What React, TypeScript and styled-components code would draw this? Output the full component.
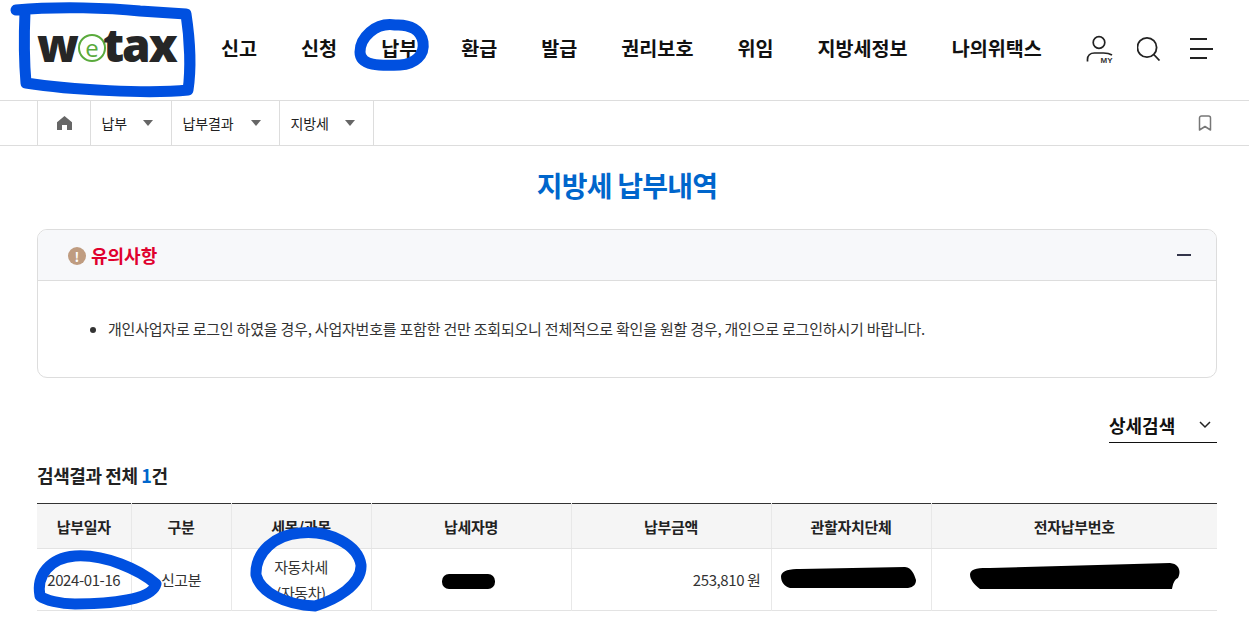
import React from 'react'
import styled, { createGlobalStyle } from 'styled-components'

const GlobalStyle = createGlobalStyle`
  html, body {
    margin: 0;
    padding: 0;
    background: #fff;
    color: #222;
    font-family: "Noto Sans CJK KR", "Noto Sans", sans-serif;
  }
  * { box-sizing: border-box; }
`

const menus = ['신고', '신청', '납부', '환급', '발급', '권리보호', '위임', '지방세정보', '나의위택스']
const crumbs = [
  { label: '납부', width: 81 },
  { label: '납부결과', width: 108 },
  { label: '지방세', width: 94 },
]
const columns = [
  { label: '납부일자', width: 94 },
  { label: '구분', width: 100 },
  { label: '세목/과목', width: 140 },
  { label: '납세자명', width: 200 },
  { label: '납부금액', width: 200 },
  { label: '관할자치단체', width: 160 },
  { label: '전자납부번호', width: 286 },
]

export default function App() {
  return (
    <Page>
      <GlobalStyle />
      <Header>
        <Logo>
          <LogoText>w</LogoText>
          <LogoE>e</LogoE>
          <LogoText>tax</LogoText>
        </Logo>
        <Nav>
          {menus.map((m) => (
            <NavItem key={m}>{m}</NavItem>
          ))}
        </Nav>
        <Utils>
          <UtilIcon width="30" height="32" viewBox="0 0 30 32">
            <circle cx="14" cy="10.5" r="5.8" fill="none" stroke="#222" strokeWidth="1.7" />
            <path d="M2.5 29.5v-2c0-3.5 2.5-6.5 7-6.5h9c3 0 6 .5 8.5 2" fill="none" stroke="#222" strokeWidth="1.7" />
            <MyLabel x="15.5" y="31">MY</MyLabel>
          </UtilIcon>
          <UtilIcon width="24" height="26" viewBox="0 0 24 26">
            <circle cx="10" cy="12.5" r="9.6" fill="none" stroke="#222" strokeWidth="1.8" />
            <path d="M16.8 19.5l5.7 6" fill="none" stroke="#222" strokeWidth="1.8" />
          </UtilIcon>
          <UtilIcon width="30" height="22" viewBox="0 0 30 22">
            <path d="M7 2h17M7 12h23M7 21h17" fill="none" stroke="#222" strokeWidth="2" />
          </UtilIcon>
        </Utils>
      </Header>

      <BreadcrumbBar>
        <Crumbs>
          <HomeCell>
            <svg width="15" height="14" viewBox="0 0 15 14">
              <path d="M7.5 0L15 6.2V14H10V9H5v5H0V6.2z" fill="#666" />
            </svg>
          </HomeCell>
          {crumbs.map((c) => (
            <Crumb key={c.label} $width={c.width}>
              {c.label}
              <Caret />
            </Crumb>
          ))}
        </Crumbs>
        <svg width="14" height="16" viewBox="0 0 14 16">
          <path d="M1.5 3a2 2 0 0 1 2-2h7a2 2 0 0 1 2 2v12L7 11.5 1.5 15z" fill="none" stroke="#777" strokeWidth="1.5" strokeLinejoin="round" />
        </svg>
      </BreadcrumbBar>

      <Title>지방세 납부내역</Title>

      <Notice>
        <NoticeHead>
          <NoticeLabel>
            <NoticeBadge>!</NoticeBadge>
            유의사항
          </NoticeLabel>
          <Collapse />
        </NoticeHead>
        <NoticeBody>
          <NoticeList>
            <li>개인사업자로 로그인 하였을 경우, 사업자번호를 포함한 건만 조회되오니 전체적으로 확인을 원할 경우, 개인으로 로그인하시기 바랍니다.</li>
          </NoticeList>
        </NoticeBody>
      </Notice>

      <SearchRow>
        <DetailSearch>
          상세검색
          <svg width="12" height="8" viewBox="0 0 12 8">
            <path d="M1 1l5 5 5-5" fill="none" stroke="#222" strokeWidth="1.5" />
          </svg>
        </DetailSearch>
      </SearchRow>

      <ResultTitle>
        검색결과 전체 <em>1</em>건
      </ResultTitle>

      <Table>
        <colgroup>
          {columns.map((c) => (
            <col key={c.label} style={{ width: c.width }} />
          ))}
        </colgroup>
        <thead>
          <tr>
            {columns.map((c) => (
              <Th key={c.label}>{c.label}</Th>
            ))}
          </tr>
        </thead>
        <tbody>
          <tr>
            <Td>2024-01-16</Td>
            <Td>신고분</Td>
            <Td>
              자동차세
              <br />
              (자동차)
            </Td>
            <Td></Td>
            <Td $right>253,810 원</Td>
            <Td></Td>
            <Td></Td>
          </tr>
        </tbody>
      </Table>

      {/* 스크린샷 위에 손으로 칠한 표시 */}
      <Overlay width="1249" height="636" viewBox="0 0 1249 636">
        <g fill="none" stroke="#0050e0" strokeWidth="11" strokeLinecap="round" strokeLinejoin="round">
          <path d="M16 10C60 6 110 8 140 11L186 14C190 40 191 70 188 90C150 94 70 90 26 83C24 60 24 35 25 12" />
          <path d="M395 25C375 22 360 38 360 52C360 66 380 66 400 65C415 64 425 55 423 42C421 30 410 24 395 25Z" />
          <path d="M40 596C36 575 50 558 75 556C105 554 140 570 156 584C152 600 110 604 75 604C60 604 45 600 40 596Z" />
          <path d="M300 533C275 535 255 552 256 575C260 592 285 605 315 606C335 600 362 585 361 565C358 545 330 530 300 533Z" />
        </g>
        <g fill="#000">
          <rect x="442" y="574" width="53" height="15" rx="7" />
          <path d="M781 576C782 570 790 569 800 569L905 567C912 568 914 574 916 580C916 584 914 587 908 588H790C784 586 781 582 781 576Z" />
          <path d="M970 574C971 568 980 568 990 568L1170 563C1180 564 1181 572 1178 578C1174 580 1173 584 1172 589H980C974 584 970 580 970 574Z" />
        </g>
      </Overlay>
    </Page>
  )
}

const Page = styled.div`
  position: relative;
  width: 1249px;
  height: 636px;
  overflow: hidden;
`

const Header = styled.header`
  display: flex;
  align-items: center;
  height: 101px;
  padding: 0 36px 4px 37px;
  border-bottom: 1px solid #ddd;
`

const Logo = styled.div`
  display: flex;
  align-items: center;
  flex: none;
  width: 184px;
  height: 44px;
`

const LogoText = styled.span`
  margin-bottom: 8px;
  font-family: "Open Sans", sans-serif;
  font-weight: 800;
  font-size: 46px;
  line-height: 44px;
  letter-spacing: -2px;
  color: #262626;
`

const LogoE = styled.span`
  flex: none;
  display: flex;
  align-items: center;
  justify-content: center;
  width: 28px;
  height: 28px;
  margin: 0 -3px 0 1px;
  border: 2px solid #5aaa3c;
  border-radius: 50%;
  font-family: "Open Sans", sans-serif;
  font-size: 24px;
  line-height: 20px;
  color: #5aaa3c;
`

const Nav = styled.nav`
  display: flex;
  gap: 44px;
`

const NavItem = styled.a`
  font-size: 19.6px;
  font-weight: 700;
  line-height: 26px;
  color: #111;
  white-space: nowrap;
`

const Utils = styled.div`
  display: flex;
  align-items: center;
  gap: 22px;
  margin-left: auto;
`

const UtilIcon = styled.svg`
  display: block;
`

const MyLabel = styled.text`
  font-family: "Liberation Sans", sans-serif;
  font-size: 8px;
  font-weight: 700;
  fill: #333;
`

const BreadcrumbBar = styled.div`
  display: flex;
  align-items: center;
  justify-content: space-between;
  height: 45px;
  padding: 0 37px;
  border-bottom: 1px solid #ddd;
`

const Crumbs = styled.div`
  display: flex;
  height: 100%;
  border-left: 1px solid #ddd;
`

const HomeCell = styled.div`
  display: flex;
  align-items: center;
  justify-content: center;
  width: 53px;
  border-right: 1px solid #ddd;
`

const Crumb = styled.div<{ $width: number }>`
  display: flex;
  align-items: center;
  justify-content: space-between;
  width: ${(p) => p.$width}px;
  padding: 0 18px 0 10.5px;
  border-right: 1px solid #ddd;
  font-size: 14px;
  letter-spacing: -0.1px;
  color: #222;
`

const Caret = styled.i`
  width: 0;
  height: 0;
  border-left: 5px solid transparent;
  border-right: 5px solid transparent;
  border-top: 6px solid #666;
`

const Title = styled.h1`
  margin: 20px 0 25px;
  padding-left: 5px;
  font-size: 28px;
  font-weight: 700;
  line-height: 38px;
  text-align: center;
  letter-spacing: -0.8px;
  color: #0066cc;
`

const Notice = styled.section`
  height: 149px;
  margin: 0 32px 0 37px;
  border: 1px solid #ddd;
  border-radius: 10px;
  overflow: hidden;
`

const NoticeHead = styled.div`
  display: flex;
  align-items: center;
  justify-content: space-between;
  height: 51px;
  padding: 0 25px 0 30px;
  background: #f7f8fa;
  border-bottom: 1px solid #ddd;
`

const NoticeLabel = styled.div`
  display: flex;
  align-items: center;
  gap: 5px;
  font-size: 18px;
  font-weight: 700;
  color: #e0002d;
`

const NoticeBadge = styled.span`
  display: flex;
  align-items: center;
  justify-content: center;
  width: 18px;
  height: 18px;
  margin-top: 2px;
  border-radius: 50%;
  background: #bf9c80;
  font-size: 13px;
  color: #fff;
`

const Collapse = styled.i`
  width: 14px;
  height: 2px;
  background: #33354a;
`

const NoticeBody = styled.div`
  padding: 36px 0 0 52px;
`

const NoticeList = styled.ul`
  margin: 0;
  padding: 0 0 0 18px;
  font-size: 15px;
  line-height: 24px;
  letter-spacing: -0.21px;
  color: #333;
`

const SearchRow = styled.div`
  display: flex;
  justify-content: flex-end;
  margin: 33px 32px 0 37px;
`

const DetailSearch = styled.div`
  display: flex;
  align-items: center;
  justify-content: space-between;
  width: 108px;
  height: 32px;
  padding: 0 6px 4px 0;
  border-bottom: 1px solid #111;
  font-size: 18px;
  font-weight: 700;
  color: #111;
`

const ResultTitle = styled.h2`
  margin: 20px 37px 16px;
  font-size: 18px;
  font-weight: 700;
  line-height: 24px;
  letter-spacing: -0.4px;
  color: #222;

  em {
    font-style: normal;
    color: #0066cc;
  }
`

const Table = styled.table`
  width: 1180px;
  margin-left: 37px;
  border-collapse: collapse;
  table-layout: fixed;
  border-top: 1px solid #333;
  border-bottom: 1px solid #e3e3e3;
`

const Th = styled.th`
  height: 45px;
  padding: 0;
  background: #f5f5f5;
  border-left: 1px solid #e8e8e8;
  border-bottom: 1px solid #e3e3e3;
  font-size: 15px;
  font-weight: 700;
  letter-spacing: -0.3px;
  color: #222;

  &:first-child { border-left: 0; }
`

const Td = styled.td<{ $right?: boolean }>`
  height: 62px;
  padding: 0 10px;
  border-left: 1px solid #e8e8e8;
  font-size: 15px;
  line-height: 26px;
  letter-spacing: -0.4px;
  text-align: ${(p) => (p.$right ? 'right' : 'center')};
  color: #333;

  &:first-child { border-left: 0; }
`

const Overlay = styled.svg`
  position: absolute;
  top: 0;
  left: 0;
  pointer-events: none;
`
